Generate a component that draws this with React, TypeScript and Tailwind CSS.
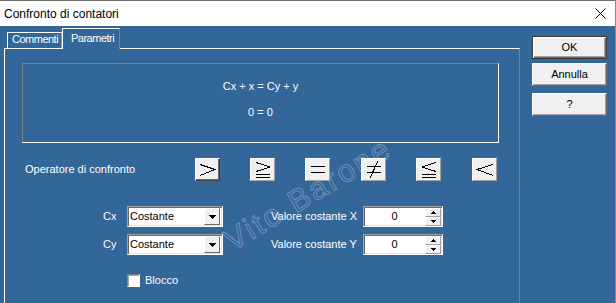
import React from 'react';

const font = { fontFamily: '"Liberation Sans", Arial, sans-serif' };

function OpButton({ children, focused = false, className = '' }: { children: React.ReactNode; focused?: boolean; className?: string }) {
  return (
    <div
      className={`w-[25px] h-[23px] bg-[#f0f0f0] border-t border-l border-white border-b border-r ${
        focused ? 'border-b-[#404040] border-r-[#404040] shadow-[inset_-1px_-1px_0_#696969]' : 'border-b-[#a0a0a0] border-r-[#a0a0a0]'
      } ${className}`}
    >
      <svg width="23" height="21" viewBox="0 0 23 21" shapeRendering="crispEdges" stroke="#000" strokeWidth="1" fill="none">
        {children}
      </svg>
    </div>
  );
}

function DialogButton({ label, isDefault = false, className = '' }: { label: string; isDefault?: boolean; className?: string }) {
  return (
    <div
      className={`w-[75px] h-[23px] flex items-center justify-center bg-[#f0f0f0] text-[11px] text-black ${
        isDefault
          ? 'border border-[#3c3c3c] shadow-[inset_1px_1px_0_#ffffff,inset_-1px_-1px_0_#696969,inset_-2px_-2px_0_#a0a0a0]'
          : 'border-t border-l border-white border-b border-r border-b-[#696969] border-r-[#696969] shadow-[inset_-1px_-1px_0_#a0a0a0]'
      } ${className}`}
    >
      {label}
    </div>
  );
}

function Combo({ value }: { value: string }) {
  return (
    <div className="w-[96px] h-[21px] flex bg-white border-t border-l border-[#a0a0a0] border-b border-r border-b-white border-r-white shadow-[inset_1px_1px_0_#696969,inset_-1px_-1px_0_#e3e3e3]">
      <div className="flex-1 pl-[2px] pt-[3px] text-[11px] leading-[13px] text-black">{value}</div>
      <div className="w-[16px] h-[17px] mt-[1px] mr-[2px] bg-[#f0f0f0] border-t border-l border-white border-b border-r border-b-[#696969] border-r-[#696969] flex items-center justify-center">
        <svg width="7" height="4" viewBox="0 0 7 4" shapeRendering="crispEdges">
          <path d="M0 0h7l-3.5 4z" fill="#000" />
        </svg>
      </div>
    </div>
  );
}

function Spin({ value }: { value: string }) {
  return (
    <div className="w-[80px] h-[21px] flex bg-white border-t border-l border-[#a0a0a0] border-b border-r border-b-white border-r-white shadow-[inset_1px_1px_0_#696969,inset_-1px_-1px_0_#e3e3e3]">
      <div className="flex-1 flex items-center justify-center text-[11px] text-black pb-[1px]">{value}</div>
      <div className="w-[16px] mt-[1px] mr-[1px] flex flex-col">
        <div className="h-[9px] bg-[#f0f0f0] border-t border-l border-white border-b border-r border-b-[#a0a0a0] border-r-[#a0a0a0] flex items-center justify-center">
          <svg width="5" height="3" viewBox="0 0 5 3" shapeRendering="crispEdges">
            <path d="M2.5 0L5 3H0z" fill="#000" />
          </svg>
        </div>
        <div className="h-[9px] bg-[#f0f0f0] border-t border-l border-white border-b border-r border-b-[#a0a0a0] border-r-[#a0a0a0] flex items-center justify-center">
          <svg width="5" height="3" viewBox="0 0 5 3" shapeRendering="crispEdges">
            <path d="M0 0h5L2.5 3z" fill="#000" />
          </svg>
        </div>
      </div>
    </div>
  );
}

export default function App() {
  return (
    <div className="w-[616px] h-[303px] overflow-hidden flex flex-col border-r border-[#8a8a8a] bg-[#336699]" style={font}>
      {/* Title bar */}
      <div className="h-[26px] shrink-0 bg-white border-t border-[#6e6e6e] flex items-center justify-between pl-[4px] pr-[9px]">
        <span className="text-[12px] text-black">Confronto di contatori</span>
        <svg width="11" height="11" viewBox="0 0 11 11" stroke="#000" strokeWidth="1">
          <path d="M0.5 0.5l10 10M10.5 0.5l-10 10" />
        </svg>
      </div>

      <div className="flex flex-1 text-white">
        {/* Tabs + panel */}
        <div className="w-[520px] pl-[4px] flex flex-col">
          <div className="h-[22px] flex items-end pl-[3px] text-[11px] tracking-[-0.5px]">
            <div className="w-[55px] h-[16px] border-t border-l border-white border-r border-r-[#a0a0a0] pl-[4px] leading-[12px]">
              Commenti
            </div>
            <div className="relative z-10 -mb-px w-[58px] h-[21px] bg-[#336699] border-t border-l border-white border-r border-r-[#808080] pl-[8px] pt-[3px] leading-[13px]">
              Parametri
            </div>
          </div>

          <div className="relative isolate w-[516px] h-[262px] border-t border-l border-white border-r border-r-[#808080] text-[11px]">
            {/* watermark */}
            <svg className="absolute inset-0 -z-10 pointer-events-none" width="515" height="262">
              <text
                x="304"
                y="147"
                textAnchor="middle"
                dominantBaseline="middle"
                transform="rotate(-31 304 147)"
                fontFamily='"Liberation Sans", Arial, sans-serif'
                fontSize="31"
                letterSpacing="2.5"
                fill="none"
                stroke="#7d95bd"
                strokeWidth="0.8"
              >
                Vito Barone
              </text>
            </svg>

            {/* Formula box */}
            <div className="ml-[17px] mt-[14px] w-[477px] h-[80px] border-t border-l border-[#808080] border-b border-r border-b-white border-r-white flex flex-col items-center pt-[15px] leading-[14px]">
              <span>Cx + x = Cy + y</span>
              <span className="mt-[12px]">0 = 0</span>
            </div>

            {/* Operators */}
            <div className="mt-[15px] h-[23px] flex items-center">
              <span className="ml-[20px] w-[170px]">Operatore di confronto</span>
              <OpButton focused>
                <path d="M4 5.5L19 10.5L4 16.5" />
              </OpButton>
              <OpButton className="ml-[30px]">
                <path d="M5 3.5L19 8L5 12.5" />
                <path d="M5 15.5h14M5 18.5h14" />
              </OpButton>
              <OpButton className="ml-[30px]">
                <path d="M5 7.5h14M5 13.5h14" />
              </OpButton>
              <OpButton className="ml-[31px]">
                <path d="M5 7.5h14M5 13.5h14" />
                <path d="M8 19L16 2" />
              </OpButton>
              <OpButton className="ml-[30px]">
                <path d="M19 3.5L5 8L19 12.5" />
                <path d="M5 15.5h14M5 18.5h14" />
              </OpButton>
              <OpButton className="ml-[31px]">
                <path d="M20 5.5L4 10.5L20 16.5" />
              </OpButton>
            </div>

            {/* Cx row */}
            <div className="mt-[25px] h-[21px] flex items-center">
              <span className="ml-[98px] w-[24px]">Cx</span>
              <Combo value="Costante" />
              <span className="ml-[48px] w-[92px]">Valore costante X</span>
              <Spin value="0" />
            </div>

            {/* Cy row */}
            <div className="mt-[7px] h-[21px] flex items-center">
              <span className="ml-[98px] w-[24px]">Cy</span>
              <Combo value="Costante" />
              <span className="ml-[48px] w-[92px]">Valore costante Y</span>
              <Spin value="0" />
            </div>

            {/* Checkbox */}
            <div className="mt-[19px] h-[13px] flex items-center ml-[122px]">
              <div className="w-[13px] h-[13px] bg-white border-t border-l border-[#808080] border-b border-r border-b-white border-r-white shadow-[inset_1px_1px_0_#a0a0a0]" />
              <span className="ml-[5px]">Blocco</span>
            </div>
          </div>
        </div>

        {/* Right buttons */}
        <div className="flex flex-col pl-[12px] pt-[10px]">
          <DialogButton label="OK" isDefault />
          <DialogButton label="Annulla" className="mt-[4px]" />
          <DialogButton label="?" className="mt-[7px]" />
        </div>
      </div>
    </div>
  );
}
